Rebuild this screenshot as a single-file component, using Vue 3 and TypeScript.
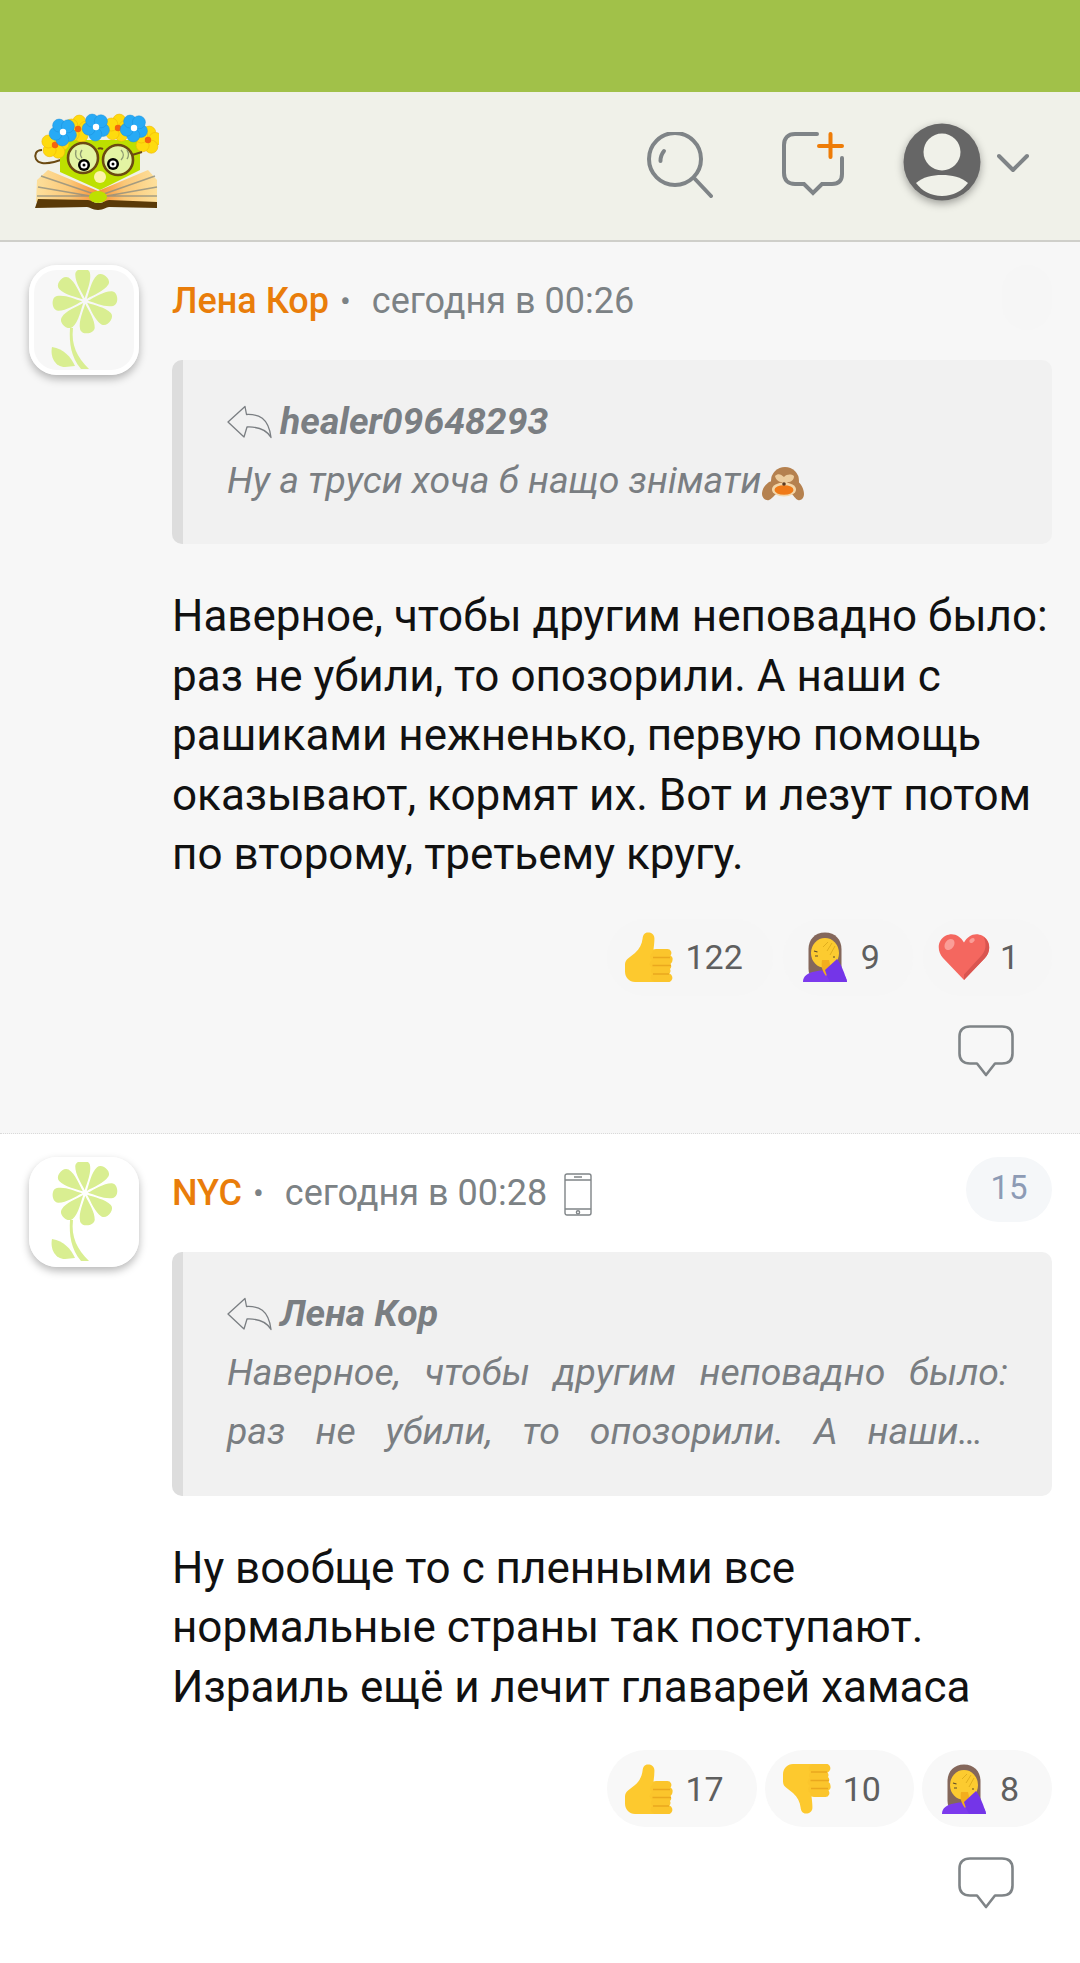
<script setup lang="ts">
interface Reaction { icon: string; count: string }
interface Post {
  name: string; time: string; device: boolean; badge: string; replyTo: string;
  quote: string[]; justify: boolean; monkey: boolean; body: string[]; reactions: Reaction[]
}
const posts: Post[] = [
  {
    name: 'Лена Кор', time: 'сегодня в 00:26', device: false, badge: '', replyTo: 'healer09648293',
    quote: ['Ну а труси хоча б нащо знімати'], justify: false, monkey: true,
    body: ['Наверное, чтобы другим неповадно было:', 'раз не убили, то опозорили. А наши с', 'рашиками нежненько, первую помощь', 'оказывают, кормят их. Вот и лезут потом', 'по второму, третьему кругу.'],
    reactions: [{ icon: 'thumb', count: '122' }, { icon: 'palm', count: '9' }, { icon: 'heart', count: '1' }]
  },
  {
    name: 'NYC', time: 'сегодня в 00:28', device: true, badge: '15', replyTo: 'Лена Кор',
    quote: ['Наверное, чтобы другим неповадно было:', 'раз не убили, то опозорили. А наши…'], justify: true, monkey: false,
    body: ['Ну вообще то с пленными все', 'нормальные страны так поступают.', 'Израиль ещё и лечит главарей хамаса'],
    reactions: [{ icon: 'thumb', count: '17' }, { icon: 'down', count: '10' }, { icon: 'palm', count: '8' }]
  }
]
const petals = [-5, 40, 85, 130, 175, 220, 265, 310]
const blue = [[43, 32], [76, 27], [114, 28]]
const yellow = [[35, 45], [58, 29], [98, 28], [128, 40]]
const ring = [0, 72, 144, 216, 288]
const sizes: Record<string, number> = { thumb: 48, down: 48, palm: 48, heart: 52 }
</script>

<template>
  <div class="page">
    <svg class="defs" width="0" height="0" aria-hidden="true">
      <defs>
        <linearGradient id="pageL" x1="0" x2="1" y1="0" y2="0">
          <stop offset="0" stop-color="#fde09c" />
          <stop offset="0.55" stop-color="#fbc878" />
          <stop offset="1" stop-color="#f78f35" />
        </linearGradient>
        <linearGradient id="pageR" x1="1" x2="0" y1="0" y2="0">
          <stop offset="0" stop-color="#fde09c" />
          <stop offset="0.55" stop-color="#fbc878" />
          <stop offset="1" stop-color="#f78f35" />
        </linearGradient>
        <symbol id="e-thumb" viewBox="0 0 48 50">
          <path d="M23 0.5c-3.6 0-5 2.600-5.400 6-.6 5.500-3 10.500-7.600 14.500L3 26.500C1 28 0 30 0 32.500v7C0 45.500 4.500 50 10 50h23V17.500h-4.500c.5-4 1-8 .9-11.500C29.300 2.500 26.500.5 23 .5z" fill="#fdc92e" />
          <path d="M31 17h11.500a4 4 0 0 1 3 6.500 4 4 0 0 1 2 4.500 4.500 4.500 0 0 1-2 4 4 4 0 0 1-.5 5 4 4 0 0 1-.5 4.500A4.500 4.500 0 0 1 41 50H31a4 4 0 0 1-3-1 4 4 0 0 1-.5-7 4 4 0 0 1-.5-6 4.500 4.500 0 0 1 0-8 4 4 0 0 1 .5-7 4 4 0 0 1 3.500-4z" fill="#fbc52c" />
          <path d="M28 25.500h17M27.500 33.500H46M28 42h16" stroke="#eaa81e" stroke-width="1.300" fill="none" />
        </symbol>
        <symbol id="e-down" viewBox="0 0 48 50">
          <g transform="matrix(1 0 0 -1 0 50)">
            <path d="M23 0.500c-3.600 0-5 2.600-5.400 6-.6 5.500-3 10.500-7.600 14.500L3 26.500C1 28 0 30 0 32.500v7C0 45.500 4.500 50 10 50h23V17.500h-4.500c.5-4 1-8 .9-11.500C29.300 2.500 26.500.5 23 .5z" fill="#fdc92e" />
            <path d="M31 17h11.500a4 4 0 0 1 3 6.500 4 4 0 0 1 2 4.500 4.500 4.500 0 0 1-2 4 4 4 0 0 1-.5 5 4 4 0 0 1-.5 4.500A4.500 4.500 0 0 1 41 50H31a4 4 0 0 1-3-1 4 4 0 0 1-.5-7 4 4 0 0 1-.5-6 4.500 4.500 0 0 1 0-8 4 4 0 0 1 .5-7 4 4 0 0 1 3.500-4z" fill="#fbc52c" />
            <path d="M28 25.500h17M27.500 33.500H46M28 42h16" stroke="#eaa81e" stroke-width="1.300" fill="none" />
          </g>
        </symbol>
        <symbol id="e-palm" viewBox="0 0 48 50">
          <path d="M24 .5C13.500.5 7.500 8 7.500 17v20c0 4 1.500 7 3.500 9h26c2.500-2 3.500-5 3.500-9V17C40.500 8 34.500.5 24 .5z" fill="#84675b" />
          <path d="M2 50c0-6 5-9.500 12-10.500l5-1h10l5 1c7 1 12 4.500 12 10.500z" fill="#7c3aed" />
          <ellipse cx="24" cy="21" rx="14" ry="15" fill="#fccb30" />
          <path d="M22 15l5-5M26 19l5-8M29 23l5-9" stroke="#c9960f" stroke-width="0.800" fill="none" opacity="0.700" />
          <path d="M13 19l3.500 1M14 24h3M32 25h2" stroke="#5c4a2c" stroke-width="1.100" fill="none" />
          <path d="M21 28c-1 6 0 11 4 16l5-7-2-9z" fill="#f3ae1d" />
          <path d="M24 38l12-11c4 5 8 15 10 23H29c-2-4-4-8-5-12z" fill="#7435e8" />
        </symbol>
        <symbol id="e-heart" viewBox="0 0 52 47">
          <path d="M26 46.500L5 24.500C-1.500 17.500-.5 6.500 7.500 2.300 15-1.500 22 2 26 9c4-7 11-10.500 18.500-6.700 8 4.200 9 15.200 2.500 22.200z" fill="#f4675f" />
          <path d="M47 24.500c6-6.500 5.500-16.500-1.500-21.200 3 6 3 13-2 18.700L26 41v5.500z" fill="#d95550" />
          <ellipse cx="11.500" cy="11" rx="4.500" ry="6" transform="rotate(35 11.500 11)" fill="#fa9d97" />
          <ellipse cx="34" cy="7" rx="3" ry="2" transform="rotate(-35 34 7)" fill="#fa9d97" />
        </symbol>
        <symbol id="e-monkey" viewBox="0 0 44 34">
          <circle cx="24" cy="14" r="14" fill="#b5814f" />
          <path d="M1 27c0-5 3-9 7-12l6-2c6-1 16-1 22 1 4 2 7 8 7 13 0 4-3 7-6 6-3-1-4-5-8-7H17c-4 2-6 6-9 7-3 1-7-2-7-6z" fill="#b5814f" />
          <path d="M14 9c3-3 6-2 9 1 3-3 7-3 10-1 0 4-3 6-6 6-2 2-5 2-6 0-3 0-6-2-7-6z" fill="#edcd9e" />
          <ellipse cx="23" cy="22.500" rx="12" ry="7" fill="#f3d6a8" />
          <ellipse cx="23" cy="23" rx="9.500" ry="4.800" fill="#f07a17" />
          <circle cx="23" cy="17" r="1.800" fill="#5a3a20" />
        </symbol>
      </defs>
    </svg>

    <div class="status"></div>

    <header class="head">
      <svg class="logo" viewBox="13 2 126 128" width="126" height="128">
        <path d="M46 58C36 62 28 64 22 63C16 62 14 57 16 53C17 51 19 50 22 50" fill="none" stroke="#6b4a12" stroke-width="2" />
        <path d="M40 40h80v30L80 90 40 72z" fill="#bde000" />
        <g v-for="(f, i) in yellow" :key="'y' + i">
          <circle v-for="a in ring" :key="a" :cx="f[0] + 7.500 * Math.cos(a * Math.PI / 180 - 1.400)" :cy="f[1] + 7.500 * Math.sin(a * Math.PI / 180 - 1.400)" r="6.500" fill="#fedb0e" stroke="#f2b705" stroke-width="0.600" />
          <circle :cx="f[0]" :cy="f[1]" r="3.200" fill="#f4640f" />
        </g>
        <g v-for="(f, i) in blue" :key="'b' + i">
          <circle v-for="a in ring" :key="a" :cx="f[0] + 7.500 * Math.cos(a * Math.PI / 180 + .4)" :cy="f[1] + 7.500 * Math.sin(a * Math.PI / 180 + .4)" r="6.500" fill="#27aaf5" stroke="#1d8ed8" stroke-width="0.500" />
          <circle :cx="f[0]" :cy="f[1]" r="3.200" fill="#fff" />
        </g>
        <path d="M78 49c1-1 3-1 5 0M112 55l10-3" fill="none" stroke="#6b4a12" stroke-width="2" />
        <circle cx="63" cy="58" r="15" fill="#e3f4a3" stroke="#6b4a12" stroke-width="2.600" />
        <circle cx="98" cy="60" r="15" fill="#e3f4a3" stroke="#6b4a12" stroke-width="2.600" />
        <path d="M56 50c-1 5 0 9 4 10M62 50c-2 3-2 6 0 8M101 50c3 3 3 7 0 10M107 50c2 3 2 6 0 9" fill="none" stroke="#8f9b72" stroke-width="1.400" />
        <circle cx="64" cy="65" r="6" fill="#000" /><circle cx="64" cy="65" r="3.500" fill="#fff" /><circle cx="64" cy="65" r="1.500" fill="#000" />
        <circle cx="93" cy="64" r="6" fill="#000" /><circle cx="93" cy="64" r="3.500" fill="#fff" /><circle cx="93" cy="64" r="1.500" fill="#000" />
        <circle cx="80" cy="77" r="6" fill="#fdf3a9" />
        <path d="M17 80l11-10 50 21v11H16z" fill="url(#pageL)" />
        <path d="M137 80l-9-10-50 21v11h59z" fill="url(#pageR)" />
        <path d="M21 76l56 19M18 87l58 10M17 96h60M135 76l-54 19M137 87l-56 10M137 96H80" stroke="#8f8f80" stroke-width="1.500" fill="none" opacity="0.800" />
        <path d="M15 108l3-9 50 1c3 0 6 3 9 3h3c3 0 6-3 9-3l48 2v6l-48-1c-3 0-5 3-11 3s-8-3-11-3z" fill="#5a3a08" />
        <ellipse cx="78" cy="97" rx="9" ry="6" fill="#bde000" />
      </svg>
      <div class="actions">
        <svg class="i-search" viewBox="0 0 66 66" width="66" height="66" fill="none" stroke="#7f8487" stroke-width="4" stroke-linecap="round">
          <circle cx="28" cy="27" r="26" />
          <path d="M48 47l16 17" />
          <path d="M13.500 29c0-4 1-7 3.500-10" />
        </svg>
        <svg class="i-new" viewBox="0 0 62 64" width="62" height="64" fill="none" stroke-width="4" stroke-linecap="round">
          <path d="M35 2H13C6 2 2 6 2 13v28c0 7 4 11 11 11h9l9 9 9-9h10c7 0 10-4 10-10V26" stroke="#7f8487" />
          <path d="M37 14h23M48.500 2v23" stroke="#ee7c07" />
        </svg>
        <svg class="i-user" viewBox="0 0 78 78" width="78" height="78">
          <circle cx="39" cy="39" r="38.500" fill="#666" />
          <circle cx="39" cy="29" r="18.500" fill="#f0f1e9" />
          <path d="M13 60c7-6 16-8 26-8s19 2 26 8c-6 8-15 13-26 13s-20-5-26-13z" fill="#f0f1e9" />
        </svg>
        <svg class="i-chev" viewBox="0 0 32 20" width="32" height="20" fill="none" stroke="#7f8487" stroke-width="4" stroke-linecap="round" stroke-linejoin="round">
          <path d="M2 3l14 14L30 3" />
        </svg>
      </div>
    </header>

    <article v-for="(p, pi) in posts" :key="pi" class="post" :class="{ first: pi === 0 }">
      <div class="ava">
        <svg viewBox="0 0 110 110" width="110" height="110">
          <path v-for="a in petals" :key="a" d="M0-3C-3-11-9-21-8-30c1-7 15-7 16 0C9-21 3-11 0-3z" fill="#d9ee91" :transform="`translate(56 36) rotate(${a}) scale(.92)`" />
          <path d="M44 63c-2 17 4 29 16 41l-8 0C42 92 40 78 41 63z" fill="#d9ee91" />
          <path d="M23 82c12 2 19 10 23 19l-10 1C26 102 21 92 23 82z" fill="#d9ee91" />
        </svg>
      </div>
      <div class="main">
        <div class="meta">
          <span class="name">{{ p.name }}</span>
          <span class="dot">•</span>
          <span class="time">{{ p.time }}</span>
          <svg v-if="p.device" class="device" viewBox="0 0 28 43" width="28" height="43" fill="none" stroke="#7f8487" stroke-width="1.400">
            <rect x="1" y="1" width="26" height="41" rx="2" />
            <path d="M1 7h26M1 36h26M10 4h8" />
            <circle cx="14" cy="39.300" r="1.600" />
          </svg>
          <span class="badge" :class="{ wide: p.badge }">{{ p.badge }}</span>
        </div>
        <blockquote class="quote">
          <div class="reply">
            <svg viewBox="0 0 45 34" width="45" height="34" fill="none" stroke="#7a7e82" stroke-width="1.300" stroke-linejoin="round">
              <path d="M1 17L18 1.500l1.500 8c12-.5 22 3 24.500 23-4-7-11-11-24-10.500L17 32z" />
            </svg>
            <b>{{ p.replyTo }}</b>
          </div>
          <div v-for="(l, li) in p.quote" :key="li" class="qline" :class="{ just: p.justify, short: p.justify && li === 1 }">{{ l }}<svg v-if="p.monkey" class="monkey" viewBox="0 0 44 34" width="44" height="34"><use href="#e-monkey" /></svg></div>
        </blockquote>
        <div class="body">
          <p v-for="(l, li) in p.body" :key="li">{{ l }}</p>
        </div>
        <div class="reacts">
          <div v-for="(r, ri) in p.reactions" :key="ri" class="pill" :class="r.icon">
            <svg :width="sizes[r.icon]" height="50"><use :href="`#e-${r.icon}`" /></svg>
            <span>{{ r.count }}</span>
          </div>
        </div>
        <div class="answer">
          <svg viewBox="0 0 56 52" width="56" height="52" fill="none" stroke="#7f8487" stroke-width="2.600" stroke-linejoin="round">
            <path d="M12 1.500h32c7 0 10.500 3.500 10.500 10v17c0 6.500-3.500 10-10.500 10h-7L28 50l-9-11.500h-7c-7 0-10.500-3.500-10.500-10v-17C1.500 5 5 1.500 12 1.500z" />
          </svg>
        </div>
      </div>
    </article>
  </div>
</template>

<style>
html, body { margin: 0; background: #fff; }
</style>

<style scoped>
.page { width: 1080px; font-family: Roboto, "Noto Sans", sans-serif; color: #111; }
.defs { position: absolute; }
.status { height: 92px; background: #a1c149; }
.head {
  height: 148px; background: #f0f1e9; border-bottom: 2px solid #cfcfca;
  display: flex; align-items: center; justify-content: space-between; padding: 0 51px 0 33px;
}
.logo { display: block; }
.actions { display: flex; align-items: center; }
.i-search { margin-right: 69px; margin-top: -3px; }
.i-new { margin-right: 59px; margin-top: -4px; }
.i-user { overflow: visible; filter: drop-shadow(0 3px 4px rgba(0, 0, 0, .35)); margin-right: 16px; margin-top: -8px; }
.i-chev { margin-top: -6px; }

.post { display: flex; padding: 23px 28px 54px 29px; background: #fff; }
.post.first { background: #f7f7f7; border-bottom: 1px dotted #d9d9d9; padding-bottom: 56.5px; }
.ava {
  width: 110px; height: 110px; box-sizing: border-box; border: 5px solid #fff; border-radius: 28px;
  box-shadow: 0 4px 8px rgba(0, 0, 0, .28); overflow: hidden; flex: none;
}
.ava svg { display: block; margin: -5px; }
.main { margin-left: 33px; flex: 1; min-width: 0; }
.meta { display: flex; align-items: center; height: 65px; font-size: 36px; }
.name { color: #e97d0a; font-weight: 500; margin-top: 7px; }
.dot { color: #7c8285; font-size: 32px; margin: 7px 21px 0 11px; }
.time { color: #7c8285; margin-top: 7px; }
.device { margin-left: 17px; margin-top: 9px; }
.badge { margin-left: auto; width: 50px; height: 65px; border-radius: 33px; background: #f6f6f6; color: #8d9bb5; text-align: center; line-height: 62px; font-size: 33px; }
.badge.wide { width: 86px; background: #f5f7f9; }
.quote {
  margin: 30px 0 0; background: #f1f1f1; border-left: 11px solid #ddd; border-radius: 10px;
  padding: 32px 44px 33px; font-size: 37.4px; line-height: 59.5px; font-style: italic; color: #7a7e82;
}
.reply { display: flex; align-items: center; gap: 8px; }
.reply svg { flex: none; }
.reply b { font-weight: 700; }
.qline { white-space: nowrap; margin-top: -1px; margin-bottom: 1px; }
.qline.just { white-space: normal; text-align: justify; text-align-last: justify; }
.qline.short { padding-right: 25px; }
.monkey { vertical-align: -8px; }
.body { margin-top: 43px; font-size: 44px; line-height: 59.5px; color: #111; }
.body p { margin: 0; white-space: nowrap; }
.reacts { display: flex; justify-content: flex-end; gap: 8px; margin-top: 33px; }
.first .reacts { gap: 10px; margin-top: 34px; }
.pill {
  height: 77px; display: flex; align-items: center; gap: 12px; padding: 0 33px 0 18px;
  border-radius: 39px; background: #f8f8f8; font-size: 34px; color: #5f5f5f;
}
.first .pill { background: #f6f6f6; }
.first .pill.thumb { padding-right: 30px; }
.pill.heart { padding-left: 15px; gap: 10px; }
.pill svg { display: block; }
.answer { display: flex; justify-content: flex-end; margin-top: 30px; padding-right: 38px; }
.first .answer { margin-top: 29px; }
.answer svg { display: block; }
</style>
